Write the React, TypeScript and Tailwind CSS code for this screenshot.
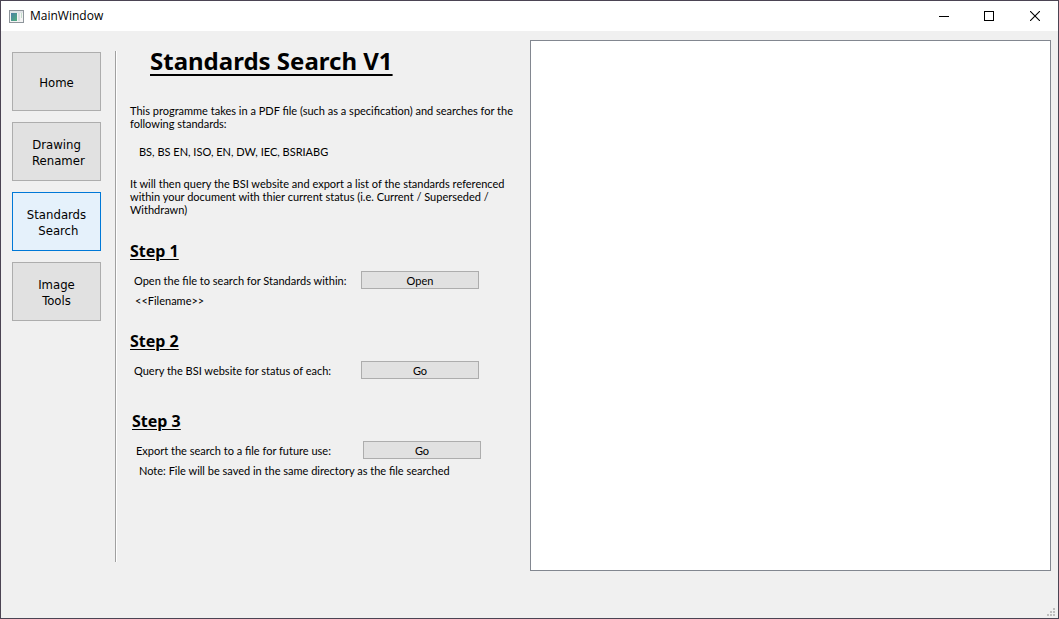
import type { ReactNode } from "react";

const tools = [
  { name: "Home", label: "Home", active: false },
  { name: "Drawing Renamer", label: "Drawing\n Renamer", active: false },
  { name: "Standards Search", label: "Standards\n Search", active: true },
  { name: "Image Tools", label: "Image\nTools", active: false },
];

function TitleBar() {
  return (
    <header className="flex h-[30px] shrink-0 items-center justify-between bg-white">
      <div className="flex items-center gap-[6px] pl-2">
        <svg width="15" height="13" viewBox="0 0 15 13" aria-hidden="true" shapeRendering="crispEdges">
          <defs>
            <linearGradient id="pane" x1="0" y1="0" x2="1" y2="1">
              <stop offset="0" stopColor="#4a7fa5" />
              <stop offset="1" stopColor="#4fae7c" />
            </linearGradient>
          </defs>
          <rect x="0.5" y="0.5" width="14" height="12" fill="#f4f4f4" stroke="#8e959b" />
          <rect x="1" y="1" width="13" height="2" fill="#dfe3e6" />
          <rect x="2" y="3" width="6" height="8" fill="url(#pane)" />
          <rect x="9" y="3" width="2" height="8" fill="#dcdfe2" />
          <rect x="12" y="3" width="1" height="5" fill="#c3dccb" />
        </svg>
        <span className="font-['Open_Sans',sans-serif] text-[12px] leading-4">MainWindow</span>
      </div>
      <div className="flex h-full">
        <button type="button" aria-label="Minimize" className="flex w-[45px] items-center justify-center">
          <svg width="10" height="10" shapeRendering="crispEdges" aria-hidden="true">
            <rect y="5" width="10" height="1" />
          </svg>
        </button>
        <button type="button" aria-label="Maximize" className="flex w-[46px] items-center justify-center">
          <svg width="10" height="10" shapeRendering="crispEdges" aria-hidden="true">
            <rect x="0.5" y="0.5" width="9" height="9" fill="none" stroke="#000" />
          </svg>
        </button>
        <button type="button" aria-label="Close" className="flex w-[46px] items-center justify-center">
          <svg width="10" height="10" aria-hidden="true">
            <path d="M0 0L10 10M10 0L0 10" stroke="#000" strokeWidth="1.1" />
          </svg>
        </button>
      </div>
    </header>
  );
}

function StepHeading({ children }: { children: ReactNode }) {
  return (
    <h2 className="font-['Noto_Sans',sans-serif] text-[16px] leading-5 font-bold underline decoration-1 underline-offset-2">
      {children}
    </h2>
  );
}

function StepAction({ id, text, action }: { id: string; text: string; action: string }) {
  return (
    <div className="mt-[9px] flex h-5 items-center justify-between pl-1">
      <span id={id}>{text}</span>
      <button
        type="button"
        aria-describedby={id}
        className="flex h-[18px] w-[118px] items-center justify-center border border-[#adadad] bg-[#e1e1e1]"
      >
        {action}
      </button>
    </div>
  );
}

export default function App() {
  return (
    <div className="relative flex h-screen min-h-[540px] flex-col border border-[#4b4453] bg-[#f0f0f0] font-['Lato','Noto_Sans',sans-serif] text-[11px] leading-[13px] text-black">
      <TitleBar />
      <div className="flex min-h-0 flex-1 pr-[7px] pb-[47px] pl-[11px]">
        <nav
          aria-label="Tools"
          className="flex shrink-0 flex-col gap-[11px] pt-[21px] font-['DejaVu_Sans_Condensed','DejaVu_Sans',sans-serif]"
        >
          {tools.map((tool) => (
            <button
              key={tool.name}
              type="button"
              aria-current={tool.active ? "page" : undefined}
              className={`h-[59px] w-[89px] border pt-[2px] text-center text-[13px] leading-4 whitespace-pre ${
                tool.active ? "border-[#0078d7] bg-[#e5f1fb]" : "border-[#adadad] bg-[#e1e1e1]"
              }`}
            >
              {tool.label}
            </button>
          ))}
        </nav>
        <div className="mt-5 mb-[9px] ml-[14px] w-[2px] shrink-0 border-r border-l border-r-white border-l-[#a0a0a0]" />
        <main className="w-[413px] shrink-0 pt-[14px] pl-[13px] whitespace-nowrap">
          <h1 className="pl-5 font-['Noto_Sans',sans-serif] text-[24px] leading-8 font-bold underline decoration-2 underline-offset-4">
            Standards Search V1
          </h1>
          <p className="mt-[27px]">
            This programme takes in a PDF file (such as a specification) and searches for the
            <br />
            following standards:
          </p>
          <p className="mt-[15px] pl-[9px]">BS, BS EN, ISO, EN, DW, IEC, BSRIABG</p>
          <p className="mt-[19px]">
            It will then query the BSI website and export a list of the standards referenced
            <br />
            within your document with thier current status (i.e. Current / Superseded /
            <br />
            Withdrawn)
          </p>
          <section className="mt-[25px] w-[349px]">
            <StepHeading>Step 1</StepHeading>
            <StepAction id="open-text" text="Open the file to search for Standards within:" action="Open" />
            <p className="mt-[4px] pl-[5px]">&lt;&lt;Filename&gt;&gt;</p>
          </section>
          <section className="mt-6 w-[349px]">
            <StepHeading>Step 2</StepHeading>
            <StepAction id="query-text" text="Query the BSI website for status of each:" action="Go" />
          </section>
          <section className="mt-[31px] ml-[2px] w-[349px]">
            <StepHeading>Step 3</StepHeading>
            <StepAction id="export-text" text="Export the search to a file for future use:" action="Go" />
            <p className="mt-[4px] pl-[7px]">Note: File will be saved in the same directory as the file searched</p>
          </section>
        </main>
        <textarea
          aria-label="Results"
          className="mt-[9px] min-w-0 flex-1 resize-none border border-[#828790] bg-white p-1 outline-none"
        />
      </div>
      <svg
        className="absolute right-[3px] bottom-[2px]"
        width="8"
        height="8"
        fill="#bfbfbf"
        shapeRendering="crispEdges"
        aria-hidden="true"
      >
        <path d="M6 0h2v2h-2zM3 3h2v2h-2zM6 3h2v2h-2zM0 6h2v2h-2zM3 6h2v2h-2zM6 6h2v2h-2z" />
      </svg>
    </div>
  );
}
